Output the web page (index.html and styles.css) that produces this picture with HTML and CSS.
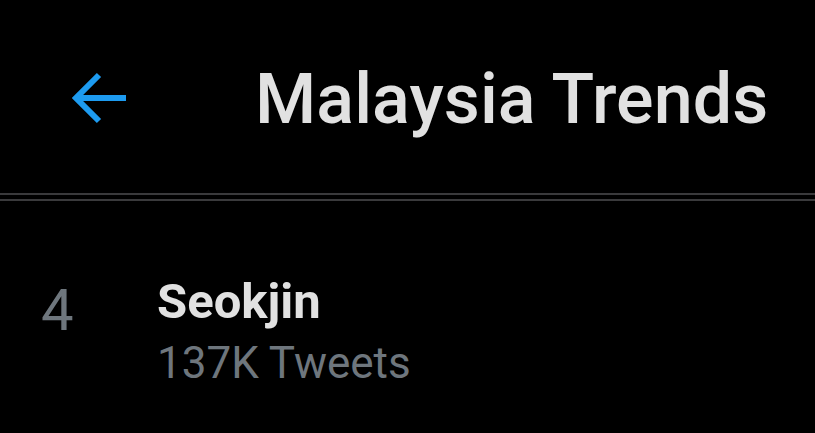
FILE: index.html
```html
<!DOCTYPE html>
<html>
<head>
<meta charset="utf-8">
<link rel="stylesheet" href="styles.css">
</head>
<body>
<div class="screen">
  <header class="topbar">
    <div class="back">
      <svg width="60" height="56" viewBox="0 0 60 56">
        <path d="M57 28 H8 M30 5 L7 28 L30 51" fill="none" stroke="#1d9bf0" stroke-width="6" stroke-linecap="butt" stroke-linejoin="miter"/>
      </svg>
    </div>
    <h1 class="title">Malaysia Trends</h1>
  </header>
  <div class="divider"></div>
  <div class="trend">
    <div class="rank">4</div>
    <div class="info">
      <div class="name">Seokjin</div>
      <div class="count">137K Tweets</div>
    </div>
  </div>
</div>
</body>
</html>
```

FILE: styles.css
```css
html, body {
  margin: 0;
  padding: 0;
  background: #000;
}
.screen {
  width: 815px;
  height: 433px;
  overflow: hidden;
  background: #000;
  font-family: Roboto, "Noto Sans", sans-serif;
}
.topbar {
  display: flex;
  align-items: flex-start;
  height: 193px;
  box-sizing: border-box;
}
.back {
  width: 255px;
  padding-left: 69px;
  padding-top: 70px;
  box-sizing: border-box;
}
.back svg { display: block; }
.title {
  margin: 0;
  padding-top: 64px;
  font-size: 70px;
  font-weight: 500;
  color: #e1e1e1;
  line-height: 1;
  letter-spacing: 0.1px;
}
.divider {
  height: 4px;
  border-top: 2px solid #3a3a3c;
  border-bottom: 2px solid #3a3a3c;
}
.trend {
  display: flex;
  padding-top: 76px;
}
.rank {
  width: 157px;
  padding-left: 41px;
  padding-top: 4px;
  box-sizing: border-box;
  font-size: 58px;
  color: #6e767d;
  line-height: 1;
}
.name {
  font-size: 49px;
  font-weight: 700;
  color: #e1e1e1;
  line-height: 1;
}
.count {
  font-size: 44px;
  color: #6e767d;
  line-height: 1;
  margin-top: 15px;
}
```
